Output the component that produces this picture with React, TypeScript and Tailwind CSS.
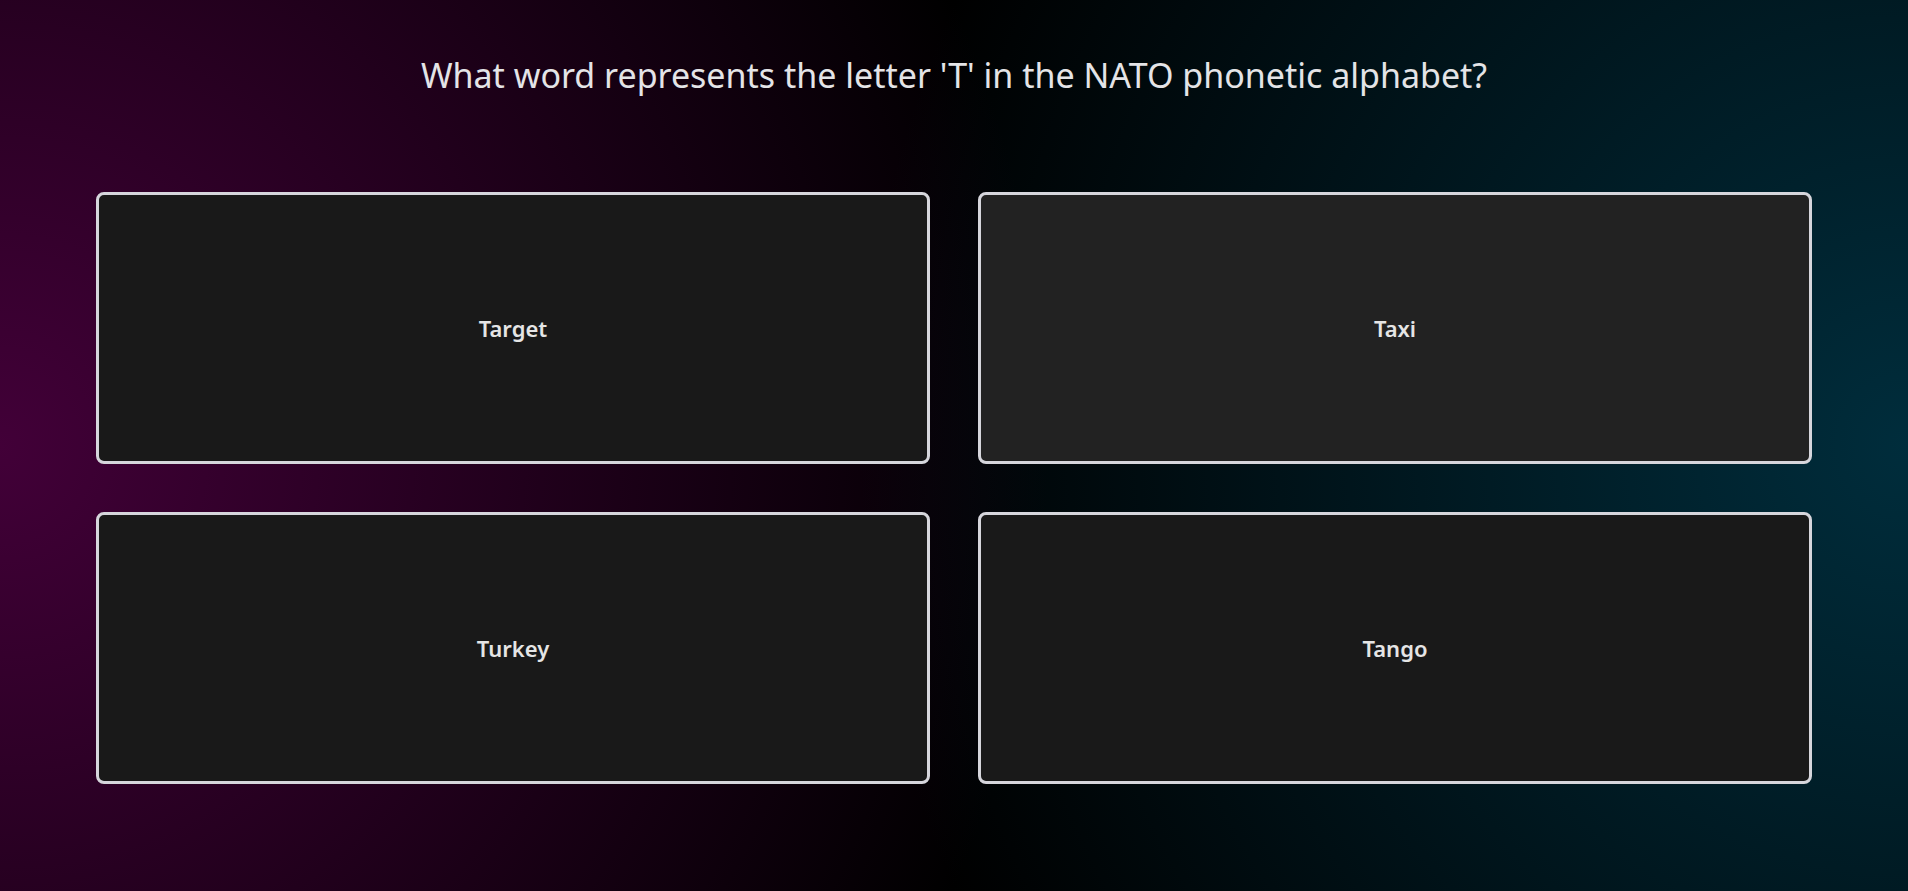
const answers = ["Target", "Taxi", "Turkey", "Tango"];

export default function App() {
  return (
    <div className="min-h-screen w-full bg-black bg-[radial-gradient(ellipse_55%_120%_at_0%_50%,#420038_0%,transparent_100%),radial-gradient(ellipse_55%_120%_at_100%_50%,#002d3c_0%,transparent_100%)] px-24 font-['Noto_Sans','Open_Sans',sans-serif]">
      <h1 className="pt-[50px] text-center text-[34px] leading-[50px] font-normal text-[#e4e4e7]">
        What word represents the letter 'T' in the NATO phonetic alphabet?
      </h1>

      <div className="mt-[92px] grid grid-cols-2 gap-12">
        {answers.map((a, i) => (
          <button
            key={a}
            className={`h-[272px] rounded-lg border-[3px] border-[#d6d6dc] flex items-center justify-center text-[22px] font-semibold text-[#e5e5e5] ${
              i === 1 ? "bg-[#222222]" : "bg-[#191919]"
            }`}
          >
            {a}
          </button>
        ))}
      </div>
    </div>
  );
}
